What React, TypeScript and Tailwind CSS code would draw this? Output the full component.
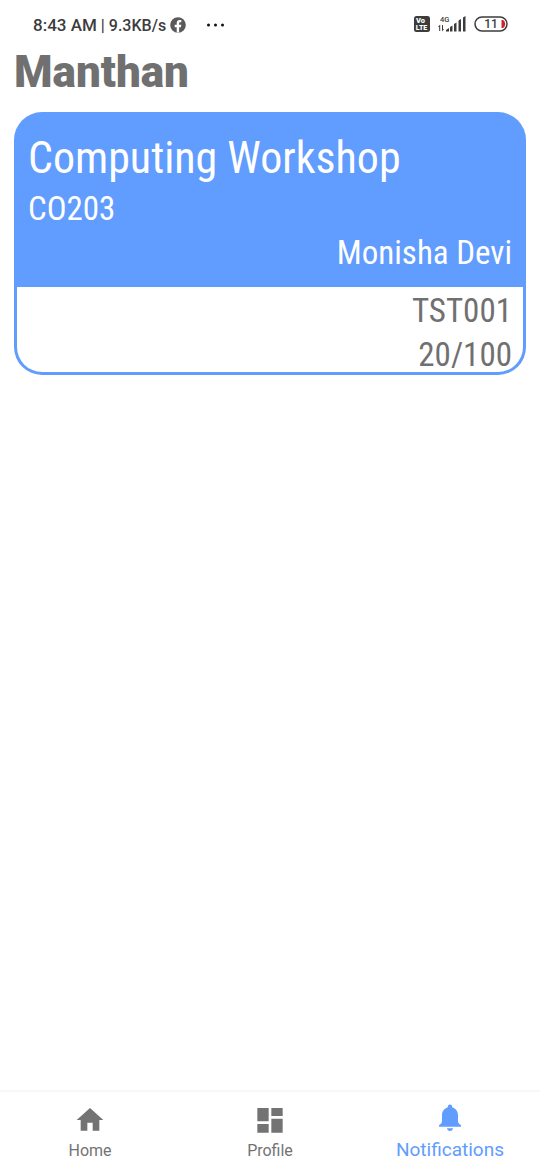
import type { ReactNode } from 'react';

const condensed = "font-['Roboto_Condensed','Roboto',sans-serif]";

function StatusBar() {
  return (
    <div className="flex h-12 items-center justify-between pr-8 pl-[33px] text-[#3c3c3c]">
      <div className="flex items-center pt-0.5 font-medium">
        <span className="text-[17px] leading-6">8:43 AM</span>
        <span className="ml-1 pt-px text-base leading-6">| 9.3KB/s</span>
        <svg className="ml-1 size-4" viewBox="0 0 16 16" aria-hidden="true">
          <circle cx="8" cy="8" r="7.8" fill="#5a5a5a" />
          <path d="M6.700 15.600V10.200H4.700V7.800h2V6.300c0-2.100 1.200-3.200 3-3.200.8 0 1.600.1 1.600.1v2h-1c-.9 0-1.200.5-1.200 1.100v1.500h2.200l-.4 2.400H9.100v5.400z" fill="#fff" />
        </svg>
        <svg className="ml-5 h-4 w-5" viewBox="0 0 20 16" fill="#111" aria-hidden="true">
          <circle cx="2.500" cy="8" r="1.500" />
          <circle cx="9.500" cy="8" r="1.500" />
          <circle cx="16.500" cy="8" r="1.500" />
        </svg>
      </div>
      <div className="flex items-center gap-2">
        <svg className="h-4 w-4" viewBox="0 0 16 16" aria-hidden="true">
          <rect width="16" height="16" rx="2.500" fill="#3c3c3c" />
          <text x="2" y="7.300" fontSize="7.500" fontWeight="900" fill="#fff" fontFamily="Roboto, sans-serif">Vo</text>
          <text x="1.800" y="14" fontSize="7" fontWeight="900" fill="#fff" fontFamily="Roboto, sans-serif">LTE</text>
        </svg>
        <svg className="h-[18px] w-7" viewBox="0 0 28 18" fill="#3c3c3c" aria-hidden="true">
          <text x="2" y="6.500" fontSize="7.500" fontWeight="500" fontFamily="Roboto, sans-serif">4G</text>
          <path d="M1.200 10.500h1V16h-1zM0 12l2.200-2.500V12zM4 10h1v5.500H4zM4 16.500V14h2z" />
          <path d="M8 15l3-2v3.500H8zM12 12l2.500-1.500v6H12zM16 9l2.500-1.500v9H16zM20.500 5.500L23 4v12.500h-2.500zM25 2.500L27.500 1v15.500H25z" />
        </svg>
        <svg className="h-4 w-[34px]" viewBox="0 0 34 16" aria-hidden="true">
          <rect x="1" y="1" width="32" height="14" rx="7" fill="none" stroke="#3c3c3c" strokeWidth="1.500" />
          <path d="M27.500 4h1.500c1.500 1 2.200 2.500 2.200 4s-.7 3-2.200 4h-1.500z" fill="#d3222a" />
          <text x="17" y="12.200" fontSize="12" fontWeight="500" textAnchor="middle" fill="#3c3c3c" fontFamily="Roboto, sans-serif">11</text>
        </svg>
      </div>
    </div>
  );
}

function NavLink({ label, active, children }: { label: string; active?: boolean; children: ReactNode }) {
  return (
    <a
      href="#"
      aria-current={active ? 'page' : undefined}
      className={`flex flex-1 flex-col items-center justify-end ${active ? 'gap-1 pb-2 text-[#619cff]' : 'gap-[3px] pb-[7px] text-[#737373]'}`}
    >
      <svg className="size-8" viewBox="0 0 24 24" fill="currentColor" aria-hidden="true">
        {children}
      </svg>
      <span className={active ? 'text-[19px] leading-6' : 'text-base leading-6'}>{label}</span>
    </a>
  );
}

export default function App() {
  return (
    <div className="flex min-h-screen flex-col bg-white font-['Roboto',sans-serif]">
      <StatusBar />
      <main className="flex-1 px-3.5">
        <h1 className="text-[44px] leading-[48px] font-black text-[#707070]">Manthan</h1>
        <article className={`mt-4 ${condensed} text-[33px] leading-11`}>
          <header className="rounded-t-[28px] bg-[#619cff] px-3.5 pt-[18px] pb-3 text-white">
            <h2 className="pb-px text-[44px] leading-[56px]">Computing Workshop</h2>
            <p>CO203</p>
            <p className="text-right">Monisha Devi</p>
          </header>
          <div className="h-[88px] rounded-b-[28px] border-3 border-t-0 border-[#619cff] px-[11px] pt-0.5 text-right text-[#707070]">
            <p>TST001</p>
            <p>20/100</p>
          </div>
        </article>
      </main>
      <nav className="flex h-20 border-t-2 border-[#f7f7f7]">
        <NavLink label="Home">
          <path d="M10 20v-6h4v6h5v-8h3L12 3 2 12h3v8z" />
        </NavLink>
        <NavLink label="Profile">
          <path d="M2.500 13H11V3H2.500v10zm0 8.500H11V15H2.500v6.500zm10.500 0h8.500V11H13v10.500zM13 3v6h8.500V3H13z" />
        </NavLink>
        <NavLink label="Notifications" active>
          <path d="M9.700 19.700h4.600c-.2 1.200-1.100 2-2.300 2s-2.100-.8-2.300-2z" />
          <path d="M12 1.800c-.9 0-1.600.7-1.600 1.600v.5C7.700 4.700 6 7 6 9.900v4.300c0 1.400-.7 2-2.200 3.100v1.300h16.400v-1.300C18.700 16.200 18 15.600 18 14.200V9.900c0-2.900-1.700-5.200-4.400-6v-.5c0-.9-.7-1.600-1.600-1.600z" />
        </NavLink>
      </nav>
    </div>
  );
}
